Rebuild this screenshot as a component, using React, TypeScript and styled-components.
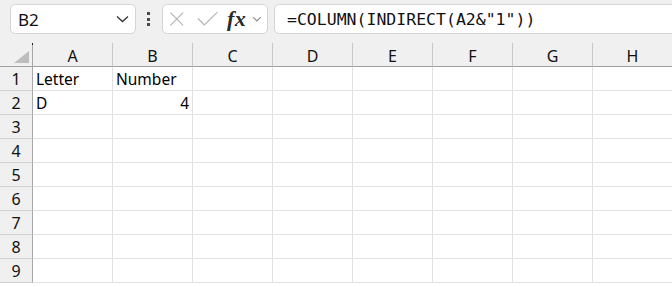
import React from 'react';
import styled, { createGlobalStyle } from 'styled-components';

const COLUMNS = ['A', 'B', 'C', 'D', 'E', 'F', 'G', 'H'];

type CellData = { text: string; align?: 'left' | 'right' };

const ROWS: Record<number, Record<string, CellData>> = {
  1: { A: { text: 'Letter' }, B: { text: 'Number' } },
  2: { A: { text: 'D' }, B: { text: '4', align: 'right' } },
};

const App = () => {
  return (
    <>
      <GlobalStyle />
      <Window>
        <Toolbar>
          <NameBox>
            <NameText>B2</NameText>
            <svg width="13" height="8" viewBox="0 0 13 8">
              <polyline points="1,1.5 6.5,6.5 12,1.5" fill="none" stroke="#333" strokeWidth="1.3" />
            </svg>
          </NameBox>
          <Grip>
            <Dot />
            <Dot />
            <Dot />
          </Grip>
          <FuncBox>
            <svg width="16" height="16" viewBox="0 0 16 16">
              <path d="M1.5 1.5 L14.5 14.5 M14.5 1.5 L1.5 14.5" stroke="#b4b4b4" strokeWidth="1.2" />
            </svg>
            <svg width="22" height="16" viewBox="0 0 22 16">
              <polyline points="1,7.5 7.5,14 21,1" fill="none" stroke="#b4b4b4" strokeWidth="1.2" />
            </svg>
            <FxLabel>fx</FxLabel>
            <svg width="10" height="6" viewBox="0 0 10 6">
              <polyline points="1,1 5,5 9,1" fill="none" stroke="#8a8a8a" strokeWidth="1.1" />
            </svg>
          </FuncBox>
          <FormulaBox>=COLUMN(INDIRECT(A2&amp;"1"))</FormulaBox>
        </Toolbar>
        <Sheet>
          <Corner>
            <Triangle />
          </Corner>
          {COLUMNS.map((c) => (
            <ColHeader key={c}>{c}</ColHeader>
          ))}
          {Array.from({ length: 9 }, (_, i) => i + 1).map((r) => (
            <React.Fragment key={r}>
              <RowHeader>{r}</RowHeader>
              {COLUMNS.map((c) => {
                const cell = ROWS[r]?.[c];
                return (
                  <Cell key={c} $align={cell?.align ?? 'left'}>
                    {cell?.text}
                  </Cell>
                );
              })}
            </React.Fragment>
          ))}
        </Sheet>
      </Window>
    </>
  );
};

export default App;

const GlobalStyle = createGlobalStyle`
  html, body {
    margin: 0;
    padding: 0;
    background: #ffffff;
    overflow: hidden;
  }
  body {
    font-family: "Noto Sans", "Liberation Sans", sans-serif;
    color: #000;
  }
`;

const Window = styled.div`
  width: 672px;
  height: 287px;
  overflow: hidden;
  background: #ffffff;
`;

const Toolbar = styled.div`
  display: flex;
  align-items: center;
  height: 43px;
  padding: 4px 0 9px 10px;
  box-sizing: border-box;
  background: #f0f0f0;
`;

const NameBox = styled.div`
  display: flex;
  align-items: center;
  justify-content: space-between;
  width: 126px;
  height: 30px;
  box-sizing: border-box;
  padding: 0 6px 0 7px;
  background: #ffffff;
  border: 1px solid #d4d4d4;
  border-radius: 5px;
`;

const NameText = styled.span`
  font-size: 17px;
  color: #111;
`;

const Grip = styled.div`
  display: flex;
  flex-direction: column;
  gap: 2.5px;
  margin: 0 12px 0 11px;
`;

const Dot = styled.span`
  width: 3px;
  height: 3px;
  background: #4a4a4a;
`;

const FuncBox = styled.div`
  display: flex;
  align-items: center;
  width: 106px;
  height: 30px;
  box-sizing: border-box;
  padding: 0 5px 0 6px;
  gap: 6px;
  background: #ffffff;
  border: 1px solid #d4d4d4;
  border-radius: 5px;

  svg:nth-child(2) {
    margin-left: 6px;
  }
`;

const FxLabel = styled.span`
  font-family: "Liberation Serif", "DejaVu Serif", serif;
  font-style: italic;
  font-weight: 600;
  font-size: 22px;
  line-height: 24px;
  color: #2a2a2a;
  margin-left: 3px;
  letter-spacing: 0.5px;
`;

const FormulaBox = styled.div`
  flex: 1;
  display: flex;
  align-items: center;
  height: 30px;
  box-sizing: border-box;
  margin-left: 6px;
  margin-right: -10px;
  padding-left: 12px;
  background: #ffffff;
  border: 1px solid #d4d4d4;
  border-radius: 5px;
  font-family: "DejaVu Sans Mono", "Liberation Mono", monospace;
  font-size: 16.5px;
  color: #111;
`;

const Sheet = styled.div`
  display: grid;
  grid-template-columns: 33px repeat(8, 80px);
  grid-auto-rows: 24px;
`;

const HeaderBase = styled.div`
  box-sizing: border-box;
  background: #f0f0f0;
  font-size: 16px;
  line-height: 20px;
  text-align: center;
  color: #111;
`;

const Corner = styled(HeaderBase)`
  position: relative;
  border-right: 1px solid #a8a8a8;
  border-bottom: 1px solid #a0a0a0;

  &::before {
    content: '';
    position: absolute;
    top: 0;
    right: -1px;
    width: 1px;
    height: 2px;
    background: #222;
  }
`;

const Triangle = styled.div`
  position: absolute;
  right: 3px;
  bottom: 3px;
  width: 0;
  height: 0;
  border-left: 15px solid transparent;
  border-bottom: 12px solid #bdbdbd;
`;

const ColHeader = styled(HeaderBase)`
  padding-top: 3px;
  border-right: 1px solid #c8c8c8;
  border-bottom: 1px solid #a0a0a0;
`;

const RowHeader = styled(HeaderBase)`
  padding-top: 2px;
  border-right: 1px solid #a8a8a8;
  border-bottom: 1px solid #d0d0d0;
`;

const Cell = styled.div<{ $align: 'left' | 'right' }>`
  box-sizing: border-box;
  padding: 2px 3px 0 3px;
  font-size: 15.5px;
  line-height: 20px;
  text-align: ${(p) => p.$align};
  white-space: nowrap;
  overflow: hidden;
  border-right: 1px solid #e1e1e1;
  border-bottom: 1px solid #e1e1e1;
`;
